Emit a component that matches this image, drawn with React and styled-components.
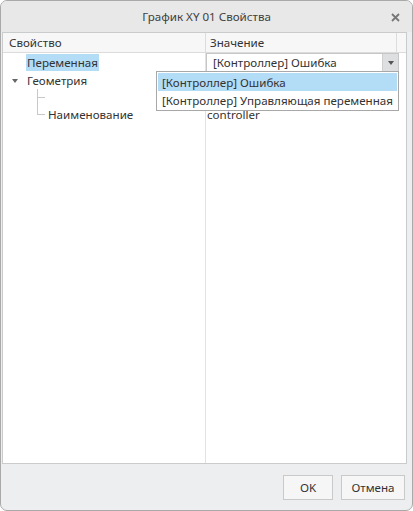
import React from "react"
import styled, { createGlobalStyle } from "styled-components"

const GlobalStyle = createGlobalStyle`
  html, body {
    margin: 0;
    padding: 0;
    background: #ffffff;
  }
  body {
    font-family: "Noto Sans", "Open Sans", sans-serif;
    font-size: 11.6px;
    color: #333333;
  }
`

const Window = styled.div`
  box-sizing: border-box;
  width: 413px;
  height: 511px;
  display: flex;
  flex-direction: column;
  background: #eceef0;
  border: 1px solid #a9a9a9;
  border-radius: 7px;
  overflow: hidden;
`

const TitleBar = styled.div`
  height: 31px;
  display: flex;
  align-items: center;
  justify-content: center;
  position: relative;
  background: #e8e8e8;
  font-size: 11.6px;
  color: #404040;
`

const Close = styled.span`
  position: absolute;
  right: 11px;
  top: 10px;
  width: 12px;
  height: 12px;
  display: flex;
  align-items: center;
  justify-content: center;
`

const Table = styled.div`
  flex: 1;
  display: flex;
  flex-direction: column;
  margin: 0 5px 0 1px;
  border: 1px solid #c9cbcd;
  background: #ffffff;
  position: relative;
`

const HeaderRow = styled.div`
  display: grid;
  grid-template-columns: 203px 191px 1fr;
  height: 19px;
  background: #f7f7f7;
  border-bottom: 1px solid #dcdcdc;
`

const HeaderCell = styled.div`
  display: flex;
  align-items: center;
  padding-left: ${p => p.$pad || 5}px;
  border-right: ${p => (p.$last ? "none" : "1px solid #dcdcdc")};
  color: #333;
`

const Body = styled.div`
  flex: 1;
  display: grid;
  grid-template-columns: 203px 1fr;
`

const Column = styled.div`
  display: flex;
  flex-direction: column;
  border-right: ${p => (p.$divider ? "1px solid #e2e2e2" : "none")};
`

const Row = styled.div`
  height: ${p => p.$h || 17}px;
  display: flex;
  align-items: center;
  padding-left: ${p => p.$indent}px;
  position: relative;
  white-space: nowrap;
`

const Label = styled.span`
  padding: 0 1px;
  line-height: 17px;
  background: ${p => (p.$selected ? "#b3dcf7" : "transparent")};
`

const Arrow = styled.span`
  width: 0;
  height: 0;
  border-left: 3.5px solid transparent;
  border-right: 3.5px solid transparent;
  border-top: 4px solid #666;
  margin-right: 8px;
`

const TreeLine = styled.span`
  position: absolute;
  left: 34px;
  top: ${p => p.$top}px;
  width: 7px;
  height: ${p => p.$h}px;
  border-left: 1px solid #c8c8c8;
  border-bottom: 1px solid #c8c8c8;
`

const Combo = styled.div`
  height: 17px;
  display: flex;
  align-items: center;
  border: 1px solid #c6c6c6;
  margin-right: 7px;
  white-space: nowrap;
`

const ComboText = styled.span`
  flex: 1;
  padding-left: 6px;
`

const ComboButton = styled.span`
  width: 15px;
  height: 17px;
  background: #dedfe0;
  display: flex;
  align-items: center;
  justify-content: center;
  border-left: 1px solid #cfcfcf;
`

const SmallArrow = styled.span`
  width: 0;
  height: 0;
  border-left: 3px solid transparent;
  border-right: 3px solid transparent;
  border-top: 4px solid #555;
`

const Value = styled.div`
  height: 17px;
  display: flex;
  align-items: center;
  padding-left: 1px;
`

const Popup = styled.div`
  position: absolute;
  left: 153px;
  top: 38px;
  width: 239px;
  background: #ffffff;
  border: 1px solid #a8a8a8;
  padding: 1px;
  display: flex;
  flex-direction: column;
  z-index: 2;
  white-space: nowrap;
`

const PopupItem = styled.div`
  height: 18px;
  display: flex;
  align-items: center;
  padding-left: 4px;
  background: ${p => (p.$active ? "#b3dcf7" : "transparent")};
`

const Footer = styled.div`
  height: 46px;
  display: flex;
  align-items: center;
  justify-content: flex-end;
  gap: 8px;
  padding-right: 7px;
`

const Button = styled.button`
  height: 25px;
  width: ${p => p.$w}px;
  border: 1px solid #c9c9c9;
  background: #f6f6f6;
  font-family: "Noto Sans", "Open Sans", sans-serif;
  font-size: 11.6px;
  color: #333;
  padding: 0;
`

export default function App() {
  return (
    <>
      <GlobalStyle />
      <Window>
        <TitleBar>
          График XY 01 Свойства
          <Close>
            <svg width="9" height="9" viewBox="0 0 9 9">
              <path d="M1 1L8 8M8 1L1 8" stroke="#777" strokeWidth="1.8" />
            </svg>
          </Close>
        </TitleBar>
        <Table>
          <HeaderRow>
            <HeaderCell $pad={6}>Свойство</HeaderCell>
            <HeaderCell $pad={4}>Значение</HeaderCell>
            <HeaderCell $last />
          </HeaderRow>
          <Body>
            <Column $divider>
              <Row $indent={23} $h={19}>
                <Label $selected>Переменная</Label>
              </Row>
              <Row $indent={9}>
                <Arrow />
                <Label>Геометрия</Label>
              </Row>
              <Row $indent={0}>
                <TreeLine $top={0} $h={8} />
              </Row>
              <Row $indent={44}>
                <TreeLine $top={-9} $h={17} />
                <Label>Наименование</Label>
              </Row>
            </Column>
            <Column>
              <Combo>
                <ComboText>[Контроллер] Ошибка</ComboText>
                <ComboButton>
                  <SmallArrow />
                </ComboButton>
              </Combo>
              <Value />
              <Value />
              <Value>controller</Value>
            </Column>
          </Body>
          <Popup>
            <PopupItem $active>[Контроллер] Ошибка</PopupItem>
            <PopupItem>[Контроллер] Управляющая переменная</PopupItem>
          </Popup>
        </Table>
        <Footer>
          <Button $w={50}>OK</Button>
          <Button $w={64}>Отмена</Button>
        </Footer>
      </Window>
    </>
  )
}
